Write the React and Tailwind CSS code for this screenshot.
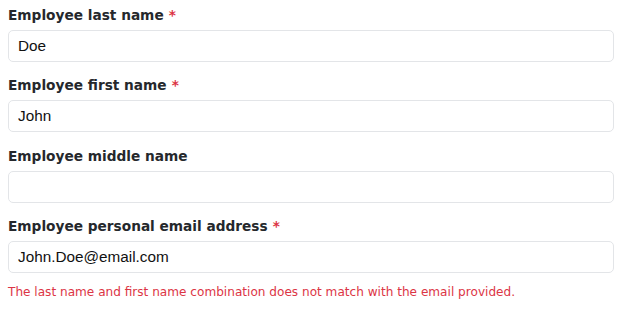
const fields = [
  { label: "Employee last name", value: "Doe", required: true },
  { label: "Employee first name", value: "John", required: true },
  { label: "Employee middle name", value: "", required: false },
  { label: "Employee personal email address", value: "John.Doe@email.com", required: true },
];

export default function App() {
  return (
    <div className="w-[624px] h-[310px] bg-white pl-2 pr-[10px] pt-[5px] font-['DejaVu_Sans',sans-serif]">
      {fields.map((f, i) => (
        <div key={f.label} className={i === 1 ? "mb-[14px]" : "mb-[13px]"}>
          <label className="block h-[20px] leading-[20px] text-[13.7px] font-bold text-[#25282c] mb-[5px]">
            {f.label}
            {f.required && <span className="text-[#dc3545] ml-[5px]">*</span>}
          </label>
          <input
            type="text"
            defaultValue={f.value}
            className="block w-full h-[32px] px-[9px] rounded-[5px] border border-[#e3e5e8] bg-white text-[15.3px] text-[#111] font-['Liberation_Sans',Arial,sans-serif] outline-none"
          />
        </div>
      ))}
      <p className="-mt-[2px] text-[12.1px] leading-[16px] text-[#dc3545]">
        The last name and first name combination does not match with the email provided.
      </p>
    </div>
  );
}
